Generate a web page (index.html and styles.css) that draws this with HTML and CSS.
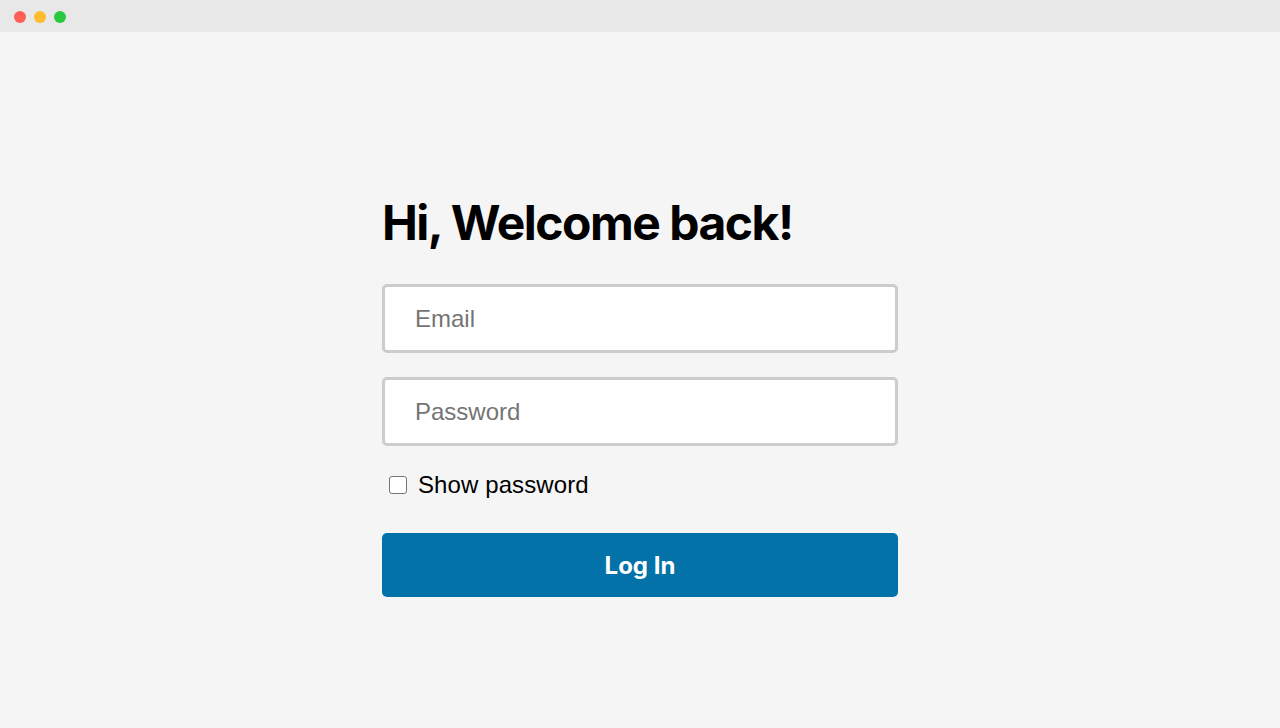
FILE: index.html
```html
<!DOCTYPE html>
<html>
<head>
<meta charset="utf-8">
<link rel="stylesheet" href="styles.css">
</head>
<body>
<div class="titlebar">
  <span class="dot red"></span>
  <span class="dot yellow"></span>
  <span class="dot green"></span>
</div>
<main class="page">
  <form class="login">
    <h1 class="title">Hi, Welcome back!</h1>
    <input class="field" type="email" placeholder="Email">
    <input class="field" type="password" placeholder="Password">
    <label class="show">
      <input type="checkbox" class="check">
      <span>Show password</span>
    </label>
    <button type="button" class="btn">Log In</button>
  </form>
</main>
</body>
</html>
```
FILE: styles.css
```css
* { box-sizing: border-box; }
html, body { margin: 0; padding: 0; height: 100%; }
body {
  background: #f5f5f5;
  font-family: "Liberation Sans", Arial, sans-serif;
  display: flex;
  flex-direction: column;
}
.titlebar {
  height: 32px;
  background: #e8e8e8;
  display: flex;
  align-items: center;
  gap: 8px;
  padding: 1px 0 0 14px;
  flex: none;
}
.dot { width: 12px; height: 12px; border-radius: 50%; display: block; }
.red { background: #ff5f57; }
.yellow { background: #febc2e; }
.green { background: #28c840; }
.page {
  flex: 1;
  display: flex;
  justify-content: center;
  padding-top: 162px;
}
.login {
  width: 516px;
  display: flex;
  flex-direction: column;
}
.title {
  font-family: Inter, sans-serif;
  font-weight: 700;
  font-size: 48px;
  letter-spacing: -1.5px;
  line-height: 58px;
  margin: 0 0 32px 0;
  color: #000;
}
.field {
  height: 69px;
  border: 3px solid #cccccc;
  border-radius: 5px;
  background: #fff;
  padding: 0 30px;
  font-family: "Liberation Sans", Arial, sans-serif;
  font-size: 24px;
  color: #000;
  margin-bottom: 24px;
  outline: none;
}
.field::placeholder { color: #757575; }
.show {
  display: flex;
  align-items: center;
  gap: 11px;
  font-size: 24px;
  letter-spacing: 0.1px;
  color: #000;
  margin: 1px 0 0 7px;
  height: 28px;
}
.check {
  width: 18px;
  height: 18px;
  margin: 0;
  appearance: none;
  border: 1.5px solid #767676;
  border-radius: 3px;
  background: #fff;
}
.btn {
  margin-top: 34px;
  height: 64px;
  border: none;
  border-radius: 5px;
  background: #0372a8;
  color: #fff;
  font-family: Inter, sans-serif;
  font-weight: 700;
  font-size: 24px;
}
```
